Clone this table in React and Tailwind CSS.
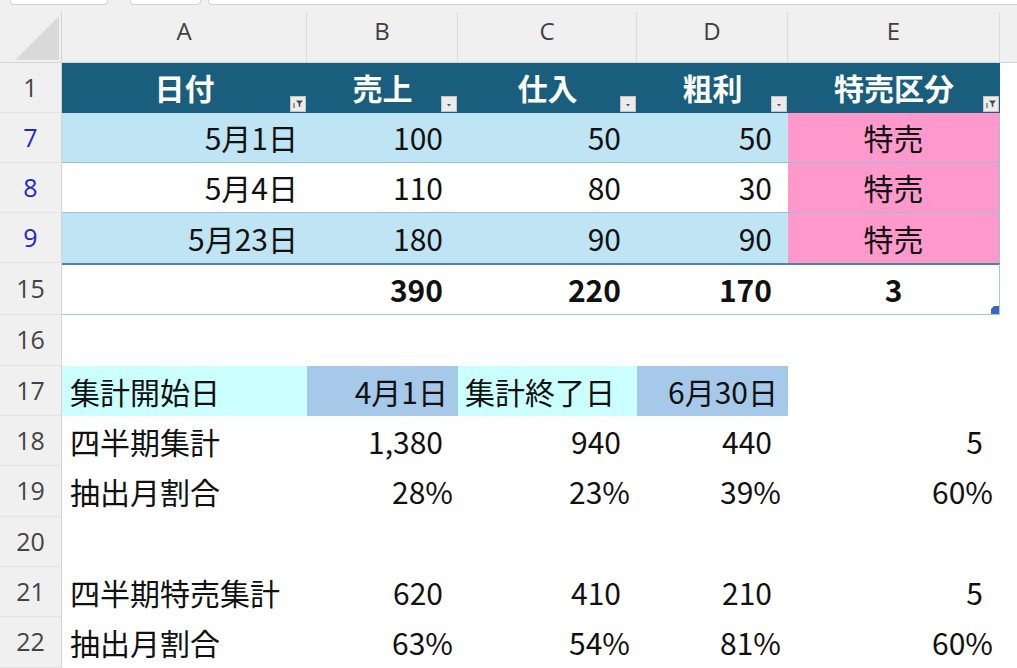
import React from "react";

const GRID = "grid grid-cols-[62px_245px_151px_179px_151px_212px_17px]";

function RowHead({ n, blue }) {
  return (
    <div
      className={
        "flex items-center justify-center bg-[#f0f0f0] border-r border-b border-r-[#d4d4d4] border-b-[#e2e2e2] font-['Open_Sans',sans-serif] font-normal text-[25px] " +
        (blue ? "text-[#2424d4]" : "text-[#444444]")
      }
    >
      {n}
    </div>
  );
}

function DropBtn({ filtered }) {
  return (
    <div className="absolute right-[1px] bottom-[1px] w-[16px] h-[16px] bg-[#ececec] border border-[#c4c4c4] flex items-center justify-center">
      {filtered ? (
        <svg width="14" height="14" viewBox="0 0 14 14">
          <path d="M5 3.5h7l-2.7 3.2v3.6l-1.6-1V6.7z" fill="#4a4a4a" />
          <path d="M3 6v5" stroke="#4a4a4a" strokeWidth="1" />
        </svg>
      ) : (
        <svg width="14" height="14" viewBox="0 0 14 14">
          <path d="M5 7h4l-2 2.4z" fill="#555555" />
        </svg>
      )}
    </div>
  );
}

function HeadCell({ label, filtered, extra = "" }) {
  return (
    <div className={"relative flex items-center justify-center bg-[#1a5e7e] text-white font-bold text-[30px] " + extra}>
      <span className="pb-[2px]">{label}</span>
      <DropBtn filtered={filtered} />
    </div>
  );
}

function C({ children, className = "" }) {
  return (
    <div className={"flex items-center whitespace-nowrap overflow-visible " + className}>
      {children}
    </div>
  );
}

function ColLetter({ l, extra = "" }) {
  return (
    <div className={"flex justify-center pt-[5px] border-r border-[#dcdcdc] leading-[28px] " + extra}>
      {l}
    </div>
  );
}

export default function App() {
  return (
    <div className="w-[1017px] h-[668px] overflow-hidden bg-white text-[#111111] font-['Noto_Sans_CJK_JP',sans-serif]">
      {/* top tab strip */}
      <div className="h-[12px] bg-[#f0f0f0] flex items-start">
        <div className="ml-[10px] w-[98px] h-[5px] bg-white border border-t-0 border-[#d2d2d2] rounded-b-[4px]" />
        <div className="ml-[22px] w-[71px] h-[5px] bg-white border border-t-0 border-[#d2d2d2] rounded-b-[4px]" />
        <div className="ml-[7px] flex-1 h-[5px] bg-white border border-t-0 border-r-0 border-[#d2d2d2] rounded-bl-[4px]" />
      </div>

      {/* column header */}
      <div className={GRID + " h-[51px] bg-[#f0f0f0] border-b border-[#d6d6d6] font-['Open_Sans',sans-serif] text-[24px] text-[#404040]"}>
        <div className="border-r border-[#d4d4d4]">
          <svg width="61" height="50" viewBox="0 0 61 50">
            <polygon points="59,4 59,48 15,48" fill="#dadada" />
          </svg>
        </div>
        <ColLetter l="A" />
        <ColLetter l="B" />
        <ColLetter l="C" />
        <ColLetter l="D" />
        <ColLetter l="E" />
        <div />
      </div>

      {/* row 1 header */}
      <div className={GRID + " h-[50px]"}>
        <RowHead n="1" />
        <HeadCell label="日付" filtered />
        <HeadCell label="売上" />
        <HeadCell label="仕入" />
        <HeadCell label="粗利" />
        <HeadCell label="特売区分" filtered />
        <div />
      </div>

      {/* row 7 */}
      <div className={GRID + " h-[50px] text-[30px]"}>
        <RowHead n="7" blue />
        <C className="justify-end pr-[9px] bg-[#bfe4f3] border-b border-[#8fc3df]">5月1日</C>
        <C className="justify-end pr-[15px] bg-[#bfe4f3] border-b border-[#8fc3df]">100</C>
        <C className="justify-end pr-[16px] bg-[#bfe4f3] border-b border-[#8fc3df]">50</C>
        <C className="justify-end pr-[16px] bg-[#bfe4f3] border-b border-[#8fc3df]">50</C>
        <C className="justify-center bg-[#ff99cc] border-b border-r border-[#8fc3df]">特売</C>
        <div />
      </div>

      {/* row 8 */}
      <div className={GRID + " h-[50px] text-[30px]"}>
        <RowHead n="8" blue />
        <C className="justify-end pr-[9px] bg-white border-b border-[#8fc3df]">5月4日</C>
        <C className="justify-end pr-[15px] bg-white border-b border-[#8fc3df]">110</C>
        <C className="justify-end pr-[16px] bg-white border-b border-[#8fc3df]">80</C>
        <C className="justify-end pr-[16px] bg-white border-b border-[#8fc3df]">30</C>
        <C className="justify-center bg-[#ff99cc] border-b border-r border-[#8fc3df]">特売</C>
        <div />
      </div>

      {/* row 9 */}
      <div className={GRID + " h-[50px] text-[30px]"}>
        <RowHead n="9" blue />
        <C className="justify-end pr-[9px] bg-[#bfe4f3]">5月23日</C>
        <C className="justify-end pr-[15px] bg-[#bfe4f3]">180</C>
        <C className="justify-end pr-[16px] bg-[#bfe4f3]">90</C>
        <C className="justify-end pr-[16px] bg-[#bfe4f3]">90</C>
        <C className="justify-center bg-[#ff99cc] border-r border-[#8fc3df]">特売</C>
        <div />
      </div>

      {/* row 15 totals */}
      <div className={GRID + " h-[52px] text-[30px]"}>
        <RowHead n="15" />
        <C className="border-t-2 border-t-[#4a86a6] border-b border-b-[#9cc8e0]" />
        <C className="justify-end pr-[15px] font-bold border-t-2 border-t-[#4a86a6] border-b border-b-[#9cc8e0]">390</C>
        <C className="justify-end pr-[16px] font-bold border-t-2 border-t-[#4a86a6] border-b border-b-[#9cc8e0]">220</C>
        <C className="justify-end pr-[16px] font-bold border-t-2 border-t-[#4a86a6] border-b border-b-[#9cc8e0]">170</C>
        <C className="relative justify-center font-bold border-t-2 border-t-[#4a86a6] border-b border-b-[#9cc8e0] border-r border-r-[#9cc8e0]">
          3
          <svg className="absolute right-0 bottom-0" width="8" height="8" viewBox="0 0 8 8">
            <polygon points="3,0 8,0 8,8 0,8 0,3" fill="#3d63c4" />
          </svg>
        </C>
        <div />
      </div>

      {/* row 16 */}
      <div className={GRID + " h-[51px]"}>
        <RowHead n="16" />
        <div />
        <div />
        <div />
        <div />
        <div />
        <div />
      </div>

      {/* row 17 */}
      <div className={GRID + " h-[50px] text-[30px]"}>
        <RowHead n="17" />
        <C className="pl-[8px] bg-[#ccffff]">集計開始日</C>
        <C className="justify-end pr-[10px] bg-[#a6c9e9]">4月1日</C>
        <C className="pl-[7px] bg-[#ccffff]">集計終了日</C>
        <C className="justify-end pr-[10px] bg-[#a6c9e9]">6月30日</C>
        <div />
        <div />
      </div>

      {/* row 18 */}
      <div className={GRID + " h-[50px] text-[30px]"}>
        <RowHead n="18" />
        <C className="pl-[8px]">四半期集計</C>
        <C className="justify-end pr-[15px]">1,380</C>
        <C className="justify-end pr-[16px]">940</C>
        <C className="justify-end pr-[16px]">440</C>
        <C className="justify-end pr-[17px]">5</C>
        <div />
      </div>

      {/* row 19 */}
      <div className={GRID + " h-[51px] text-[30px]"}>
        <RowHead n="19" />
        <C className="pl-[8px]">抽出月割合</C>
        <C className="justify-end pr-[5px]">28%</C>
        <C className="justify-end pr-[7px]">23%</C>
        <C className="justify-end pr-[7px]">39%</C>
        <C className="justify-end pr-[7px]">60%</C>
        <div />
      </div>

      {/* row 20 */}
      <div className={GRID + " h-[50px]"}>
        <RowHead n="20" />
        <div />
        <div />
        <div />
        <div />
        <div />
        <div />
      </div>

      {/* row 21 */}
      <div className={GRID + " h-[50px] text-[30px]"}>
        <RowHead n="21" />
        <C className="pl-[8px]">四半期特売集計</C>
        <C className="justify-end pr-[15px]">620</C>
        <C className="justify-end pr-[16px]">410</C>
        <C className="justify-end pr-[16px]">210</C>
        <C className="justify-end pr-[17px]">5</C>
        <div />
      </div>

      {/* row 22 */}
      <div className={GRID + " h-[51px] text-[30px]"}>
        <RowHead n="22" />
        <C className="pl-[8px]">抽出月割合</C>
        <C className="justify-end pr-[5px]">63%</C>
        <C className="justify-end pr-[7px]">54%</C>
        <C className="justify-end pr-[7px]">81%</C>
        <C className="justify-end pr-[7px]">60%</C>
        <div />
      </div>
    </div>
  );
}
